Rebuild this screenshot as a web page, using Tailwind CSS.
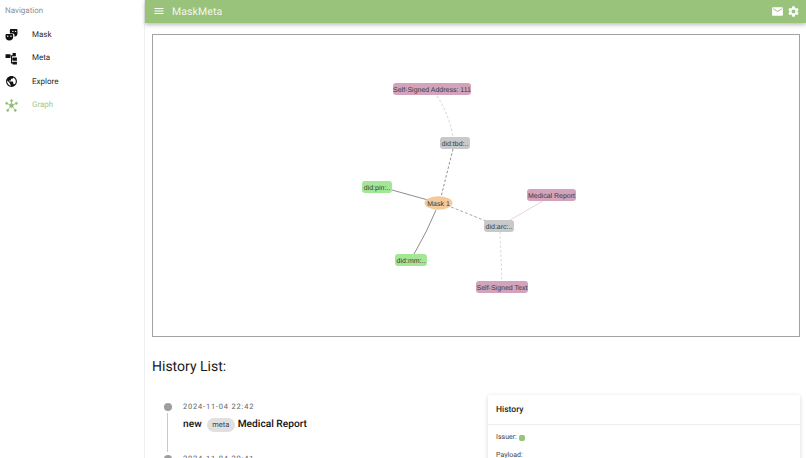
<!DOCTYPE html>
<html><head><meta charset="utf-8">
<script src="https://cdn.jsdelivr.net/npm/@tailwindcss/browser@4"></script>
</head>
<body class="m-0 bg-white">
<div class="flex h-[458px] w-[806px] overflow-hidden bg-white font-['Roboto',sans-serif] text-[#212121] [text-rendering:geometricPrecision]">
  <aside class="w-[145px] h-full shrink-0 border-r border-[#efefef] flex flex-col">
    <div class="h-[21px] pl-[5px] flex items-center text-[8px] text-[#8f8f8f]">Navigation</div>
    <nav class="flex flex-col text-[8px] mt-[2px]">
      <a class="h-[23.500px] flex items-center"><span class="w-[32px] flex">
        <svg class="w-[13px] h-[13px] ml-[5px]" viewBox="0 0 24 24" fill="#111"><path d="M9 10V3.500C9 2.700 9.700 2 10.500 2h11c.8 0 1.500.7 1.500 1.500V10c0 3-2 5.500-5.500 6v-2.500c0-1-.8-3.500-2.500-3.500zM13 6.200a1.500 1.200 0 1 0 3 0a1.500 1.200 0 1 0-3 0zM18 6.200a1.500 1.200 0 1 0 3 0a1.500 1.200 0 1 0-3 0z"/><path fill-rule="evenodd" d="M1 12.500c0-.8.7-1.500 1.500-1.500h11c.8 0 1.500.7 1.500 1.500V17c0 3.400-2.800 6-7 6s-7-2.600-7-6zM3.500 15a1.500 1.200 0 1 0 3 0a1.500 1.200 0 1 0-3 0zM9.500 15a1.500 1.200 0 1 0 3 0a1.500 1.200 0 1 0-3 0z"/></svg></span>
        <span class="text-[#2a2a2a]">Mask</span></a>
      <a class="h-[23.500px] flex items-center"><span class="w-[32px] flex">
        <svg class="w-[13px] h-[13px] ml-[5px]" viewBox="0 0 24 24" fill="#111"><path d="M1 4h9v7H1zM14 2h6v6h-6zM14 10h8v6h-8zM14 18h8v5h-8z"/><path d="M10 6h5v2h-5zM11 8h2v12h-2zM11 12h4v2h-4zM11 19h4v2h-4z"/></svg></span>
        <span class="text-[#2a2a2a]">Meta</span></a>
      <a class="h-[23.500px] flex items-center"><span class="w-[32px] flex">
        <svg class="w-[13px] h-[13px] ml-[5px]" viewBox="0 0 24 24" fill="#111"><path d="M12 2C6.480 2 2 6.480 2 12s4.480 10 10 10 10-4.480 10-10S17.520 2 12 2zm-1 17.930c-3.950-.49-7-3.850-7-7.930 0-.62.080-1.210.21-1.790L9 15v1c0 1.100.9 2 2 2v1.930zm6.900-2.540c-.26-.81-1-1.390-1.900-1.390h-1v-3c0-.55-.45-1-1-1H8v-2h2c.55 0 1-.45 1-1V7h2c1.100 0 2-.9 2-2v-.41c2.930 1.190 5 4.060 5 7.410 0 2.080-.8 3.970-2.100 5.390z"/></svg></span>
        <span class="text-[#2a2a2a]">Explore</span></a>
      <a class="h-[23.500px] flex items-center"><span class="w-[32px] flex">
        <svg class="w-[13px] h-[13px] ml-[5px]" viewBox="0 0 24 24" fill="#8fbf72" stroke="#8fbf72"><g stroke-width="1.500"><path d="M12 12L12 3M12 12L3 8M12 12L21 8M12 12L5 21M12 12L19 21"/></g><circle cx="12" cy="12" r="3.500"/><circle cx="12" cy="3" r="2"/><circle cx="3" cy="8" r="2"/><circle cx="21" cy="8" r="2"/><circle cx="5" cy="21" r="2"/><circle cx="19" cy="21" r="2"/></svg></span>
        <span class="text-[#a3c989]">Graph</span></a>
    </nav>
  </aside>
  <div class="flex-1 min-w-0 flex flex-col">
    <header class="h-[23px] shrink-0 bg-[#99c27a] flex items-center pl-[8px] pr-[6px] shadow-[0_2px_4px_rgba(0,0,0,0.25)] text-white relative z-10">
      <svg class="w-[12px] h-[12px] mt-[-1px]" viewBox="0 0 24 24" fill="#fff"><path d="M3 18h18v-2H3v2zm0-5h18v-2H3v2zm0-7v2h18V6H3z"/></svg>
      <span class="ml-[7px] mt-[1px] text-[10.500px] tracking-[0.1px] leading-[14px] text-[#f2f8ed]">MaskMeta</span>
      <div class="ml-auto flex items-center gap-[3px] mt-[-1px]">
        <svg class="w-[13px] h-[13px]" viewBox="0 0 24 24" fill="#fff"><path d="M20 4H4c-1.100 0-2 .9-2 2v12c0 1.100.9 2 2 2h16c1.100 0 2-.9 2-2V6c0-1.100-.9-2-2-2zm0 4l-8 5-8-5V6l8 5 8-5v2z"/></svg>
        <svg class="w-[13px] h-[13px]" viewBox="0 0 24 24" fill="#fff"><path d="M19.140 12.940c.04-.3.060-.61.060-.94 0-.32-.02-.64-.07-.94l2.030-1.580c.18-.14.23-.41.120-.61l-1.920-3.320c-.12-.22-.37-.29-.59-.22l-2.390.96c-.5-.38-1.030-.7-1.620-.94l-.36-2.540c-.04-.24-.24-.41-.48-.41h-3.840c-.24 0-.43.17-.47.41l-.36 2.540c-.59.24-1.130.57-1.620.94l-2.390-.96c-.22-.08-.47 0-.59.22L2.740 8.870c-.12.21-.08.47.12.61l2.030 1.580c-.05.3-.09.63-.09.94s.02.64.07.94l-2.030 1.580c-.18.14-.23.41-.12.61l1.920 3.320c.12.22.37.29.59.22l2.390-.96c.5.38 1.030.7 1.620.94l.36 2.540c.05.24.24.41.48.41h3.840c.24 0 .44-.17.47-.41l.36-2.540c.59-.24 1.130-.56 1.620-.94l2.390.96c.22.08.47 0 .59-.22l1.920-3.320c.12-.22.07-.47-.12-.61l-2.010-1.580zM12 15.600c-1.980 0-3.600-1.620-3.600-3.600s1.620-3.600 3.600-3.600 3.600 1.620 3.600 3.600-1.620 3.600-3.600 3.600z"/></svg>
      </div>
    </header>
    <main class="flex-1 min-h-0 overflow-hidden pl-[7px] pr-[6px] pt-[11px]">
      <div class="h-[303px] w-[648px] border border-[#a3a3a3]">
        <svg class="block w-full h-full" viewBox="153 35 646 301" font-family="'Liberation Sans',sans-serif" font-size="7" fill="#3a3a3a" text-anchor="middle">
          <g fill="none">
            <path d="M437 96Q449 114 453 137" stroke="#c9c9c9" stroke-width="0.800" stroke-dasharray="2.500 2"/>
            <path d="M453 149L441 197" stroke="#808080" stroke-width="0.900" stroke-dasharray="2.500 2"/>
            <path d="M392 190L428 200" stroke="#808080" stroke-width="0.900"/>
            <path d="M436 210Q427 232 414 254" stroke="#808080" stroke-width="0.900"/>
            <path d="M451 207L486 221" stroke="#8f8f8f" stroke-width="0.800" stroke-dasharray="3 2"/>
            <path d="M510 220L543 201" stroke="#e8cdd8" stroke-width="0.900"/>
            <path d="M500 232L502 281" stroke="#d0d0d0" stroke-width="0.800" stroke-dasharray="2.500 2"/>
          </g>
          <g>
            <rect x="393" y="83" width="78" height="12" rx="3" fill="#d3a3bc"/><text x="432" y="91.500">Self-Signed Address: 111</text>
            <rect x="440" y="137" width="30" height="12" rx="3" fill="#c9c9c9"/><text x="455" y="145.500">did:tbd:..</text>
            <rect x="362" y="181" width="30" height="12" rx="3" fill="#a3e696"/><text x="377" y="189.500">did:pin:..</text>
            <ellipse cx="438.500" cy="203" rx="14" ry="6.800" fill="#f5c89b"/><text x="438.500" y="205.500">Mask 1</text>
            <rect x="527" y="189" width="49" height="12" rx="3" fill="#d3a3bc"/><text x="551.500" y="197.500">Medical Report</text>
            <rect x="484" y="220" width="30" height="12" rx="3" fill="#c9c9c9"/><text x="499" y="228.500">did:arc:..</text>
            <rect x="395" y="254" width="32" height="12" rx="3" fill="#a3e696"/><text x="411" y="262.500">did:mm:..</text>
            <rect x="476" y="281" width="52" height="12" rx="3" fill="#d3a3bc"/><text x="502" y="289.500">Self-Signed Text</text>
          </g>
        </svg>
      </div>
      <h2 class="mt-[21px] text-[14px] leading-[18px] text-[#1a1a1a]">History List:</h2>
      <div class="mt-[19px] flex items-start">
        <ol class="w-[336px] shrink-0 pl-[11px] pt-[7px]">
          <li class="flex h-[52px]">
            <div class="w-[9px] flex flex-col items-center">
              <span class="w-[8px] h-[8px] mt-[1px] rounded-full bg-[#9e9e9e] shrink-0"></span>
              <span class="w-[1px] flex-1 mt-[2px] mb-[2px] bg-[#c9c9c9]"></span>
            </div>
            <div class="ml-[11px] min-w-0">
              <div class="text-[7.500px] leading-[10px] tracking-[0.8px] text-[#666]">2024-11-04 22:42</div>
              <div class="mt-[5.500px] flex items-center text-[10.200px] font-medium text-[#111] h-[14px]">new
                <span class="ml-[5px] mr-[3px] h-[14px] w-[28px] rounded-full bg-[#e0e0e0] text-[7.500px] font-normal text-[#444] flex items-center justify-center">meta</span>
                Medical Report</div>
            </div>
          </li>
          <li class="flex">
            <div class="w-[9px] flex flex-col items-center">
              <span class="w-[8px] h-[8px] mt-[1px] rounded-full bg-[#9e9e9e] shrink-0"></span>
            </div>
            <div class="ml-[11px] text-[7.500px] leading-[10px] tracking-[0.8px] text-[#666]">2024-11-04 20:41</div>
          </li>
        </ol>
        <section class="w-[312px] shrink-0 rounded-[2px] shadow-[0_1px_4px_rgba(0,0,0,0.16)]">
          <div class="h-[30px] pl-[8px] pt-[1px] flex items-center text-[8.500px] font-medium border-b border-[#eeeeee] text-[#222]">History</div>
          <div class="pl-[8px] pt-[7px] text-[7px] text-[#444]">
            <div class="flex items-center h-[11px]">Issuer:<span class="ml-[2px] w-[6px] h-[6px] rounded-[2px] bg-[#99c27a]"></span></div>
            <div class="mt-[7px]">Payload:</div>
          </div>
        </section>
      </div>
    </main>
  </div>
</div>
</body></html>
